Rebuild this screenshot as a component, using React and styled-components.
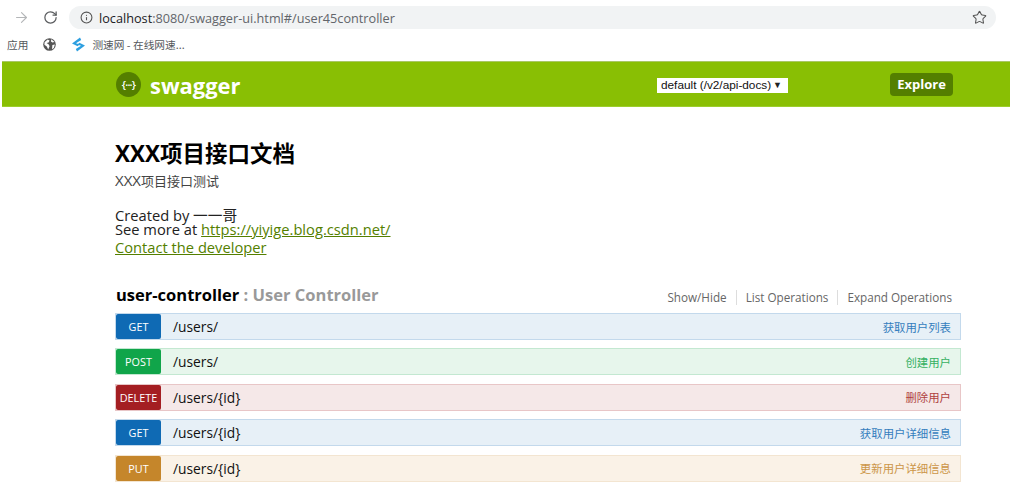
import React from "react";
import styled, { createGlobalStyle } from "styled-components";
import { ArrowRight, RotateCw, Info, Star } from "lucide-react";

const CJK = `"Open Sans", "Noto Sans CJK SC", sans-serif`;

const operations = [
  { method: "GET", path: "/users/", summary: "获取用户列表" },
  { method: "POST", path: "/users/", summary: "创建用户" },
  { method: "DELETE", path: "/users/{id}", summary: "删除用户" },
  { method: "GET", path: "/users/{id}", summary: "获取用户详细信息" },
  { method: "PUT", path: "/users/{id}", summary: "更新用户详细信息" },
];

const palette = {
  GET: { badge: "#0f6ab4", bg: "#e7f0f7", border: "#c3d9ec", text: "#0f6ab4" },
  POST: { badge: "#10a54a", bg: "#e7f6ec", border: "#c3e8d1", text: "#10a54a" },
  DELETE: { badge: "#a41e22", bg: "#f5e8e8", border: "#e8c6c7", text: "#a41e22" },
  PUT: { badge: "#c5862b", bg: "#faf2e7", border: "#f3e5d1", text: "#c5862b" },
};

export default function App() {
  return (
    <Page>
      <GlobalStyle />
      <Browser>
        <AddressRow>
          <NavIcon $muted>
            <ArrowRight size={17} strokeWidth={1.6} />
          </NavIcon>
          <NavIcon>
            <RotateCw size={15} strokeWidth={2} />
          </NavIcon>
          <AddressBar>
            <Info size={13} strokeWidth={2} color="#555" />
            <Url>
              <strong>localhost</strong>:8080/swagger-ui.html#/user45controller
            </Url>
            <Star size={15} strokeWidth={1.7} color="#555" />
          </AddressBar>
        </AddressRow>
        <Bookmarks>
          <BookmarkText>应用</BookmarkText>
          <svg width="13" height="13" viewBox="0 0 13 13">
            <circle cx="6.5" cy="6.5" r="6.3" fill="#555" />
            <path d="M1.6 4.2 4.6 1.6 6.6 2.6 5.6 4.4 3.6 5 5.8 6.6 6.6 8.2 5.2 11.4 3.8 8.4 1.4 6.8ZM8.2 1.2 11.6 4 9.4 4.6 8 3.4ZM9.4 7 11.9 6.6 10.8 10 9 11.2Z" fill="#fff" />
          </svg>
          <SiteLink>
            <svg width="15" height="15" viewBox="0 0 15 15">
              <path d="M9 .6 1 6.4 6.6 9.2 8.6 7.6 5 6.2 10.2 3Z" fill="#2d9fe0" />
              <path d="M6 14.4 14 8.6 8.4 5.8 6.4 7.4 10 8.8 4.8 12Z" fill="#2d9fe0" />
            </svg>
            <BookmarkText>测速网 - 在线网速...</BookmarkText>
          </SiteLink>
        </Bookmarks>
      </Browser>

      <Header>
        <HeaderInner>
          <Brand>
            <LogoMark>{"{···}"}</LogoMark>
            <BrandName>swagger</BrandName>
          </Brand>
          <SpecSelect>
            <span>default (/v2/api-docs)</span>
            <Caret>▼</Caret>
          </SpecSelect>
          <ExploreButton>Explore</ExploreButton>
        </HeaderInner>
      </Header>

      <Content>
        <Title>XXX项目接口文档</Title>
        <Description>
          <Latin>XXX</Latin>项目接口测试
        </Description>
        <Contact>
          <ContactLine>Created by 一一哥</ContactLine>
          <ContactLine>
            See more at <GreenLink>https://yiyige.blog.csdn.net/</GreenLink>
          </ContactLine>
          <DeveloperLine>
            <GreenLink>Contact the developer</GreenLink>
          </DeveloperLine>
        </Contact>

        <ResourceHead>
          <ResourceName>
            user-controller <ResourceNote>: User Controller</ResourceNote>
          </ResourceName>
          <Actions>
            <Action>Show/Hide</Action>
            <Action>List Operations</Action>
            <Action>Expand Operations</Action>
          </Actions>
        </ResourceHead>

        <OperationList>
          {operations.map((op, i) => (
            <Operation key={i} $method={op.method}>
              <MethodBadge $method={op.method}>{op.method}</MethodBadge>
              <OperationPath>{op.path}</OperationPath>
              <OperationSummary $method={op.method}>{op.summary}</OperationSummary>
            </Operation>
          ))}
        </OperationList>
      </Content>
    </Page>
  );
}

const GlobalStyle = createGlobalStyle`
  html, body {
    margin: 0;
    padding: 0;
    background: #fff;
  }
  * {
    box-sizing: border-box;
  }
`;

const Page = styled.div`
  width: 1012px;
  height: 500px;
  overflow: hidden;
  background: #fff;
  font-family: ${CJK};
`;

const Browser = styled.div`
  height: 61px;
  padding-top: 6px;
`;

const AddressRow = styled.div`
  display: flex;
  align-items: center;
  height: 23px;
  padding-left: 13px;
`;

const NavIcon = styled.div`
  display: flex;
  justify-content: center;
  width: 17px;
  margin-right: 12px;
  color: ${(p) => (p.$muted ? "#b4b6b8" : "#5a5c5f")};
`;

const AddressBar = styled.div`
  display: flex;
  align-items: center;
  width: 927px;
  height: 23px;
  margin-left: -2px;
  padding: 0 9px 0 11px;
  border-radius: 12px;
  background: #f1f3f4;
`;

const Url = styled.div`
  flex: 1;
  margin-left: 6px;
  font-family: "Open Sans", sans-serif;
  font-size: 12.7px;
  color: #62656a;

  strong {
    font-weight: 400;
    color: #202124;
  }
`;

const Bookmarks = styled.div`
  display: flex;
  align-items: center;
  gap: 15px;
  height: 20px;
  margin-top: 5px;
  padding-left: 7px;
`;

const BookmarkText = styled.span`
  font-family: "Noto Sans CJK SC", sans-serif;
  font-size: 10.7px;
  color: #55585c;
`;

const SiteLink = styled.div`
  display: flex;
  align-items: center;
  gap: 6px;
`;

const Header = styled.div`
  height: 46px;
  margin: 0 2px;
  background: #89bf04;
  border-top: 1px solid #a9c766;
  border-bottom: 1px solid #9cce2c;
`;

const HeaderInner = styled.div`
  display: flex;
  align-items: center;
  height: 100%;
  padding-left: 114px;
  padding-right: 57px;
`;

const Brand = styled.div`
  display: flex;
  align-items: center;
  gap: 9px;
  flex: 1;
`;

const LogoMark = styled.div`
  display: flex;
  align-items: center;
  justify-content: center;
  width: 25px;
  height: 25px;
  border-radius: 50%;
  background: #547f00;
  color: #fff;
  font-size: 11px;
  font-weight: 600;
  letter-spacing: -0.8px;
`;

const BrandName = styled.div`
  font-family: "Open Sans", sans-serif;
  font-size: 21.9px;
  font-weight: 700;
  color: #fff;
  line-height: 1;
  margin-top: 3px;
`;

const SpecSelect = styled.div`
  display: flex;
  align-items: center;
  justify-content: space-between;
  width: 131px;
  height: 15px;
  margin-top: 2px;
  margin-right: 102px;
  padding: 0 6px 0 4px;
  background: #fff;
  font-family: "Liberation Sans", sans-serif;
  font-size: 11.8px;
  color: #111;
`;

const Caret = styled.span`
  font-size: 9px;
  color: #222;
`;

const ExploreButton = styled.div`
  display: flex;
  align-items: center;
  justify-content: center;
  width: 63px;
  height: 23px;
  border-radius: 4px;
  background: #547f00;
  color: #fff;
  font-size: 13px;
  font-weight: 700;
`;

const Content = styled.div`
  width: 846px;
  margin-left: 115px;
`;

const Title = styled.h1`
  margin: 32px 0 0;
  font-family: ${CJK};
  font-size: 22.5px;
  font-weight: 700;
  line-height: 30px;
  color: #000;
`;

const Description = styled.div`
  height: 18px;
  margin-top: 2px;
  font-size: 13px;
  line-height: 18px;
  color: #444;
`;

const Latin = styled.span`
  font-size: 15px;
`;

const Contact = styled.div`
  margin-top: 19px;
  font-size: 14.7px;
  color: #222;
`;

const ContactLine = styled.div`
  line-height: 14px;
`;

const DeveloperLine = styled.div`
  margin-top: 4px;
  line-height: 14px;
`;

const GreenLink = styled.a`
  color: #547f00;
  text-decoration: underline;
`;

const ResourceHead = styled.div`
  display: flex;
  align-items: center;
  justify-content: space-between;
  height: 20px;
  margin-top: 30px;
  padding-left: 1px;
  padding-right: 9px;
`;

const ResourceName = styled.div`
  font-size: 16.5px;
  font-weight: 700;
  color: #000;
`;

const ResourceNote = styled.span`
  color: #999;
`;

const Actions = styled.div`
  display: flex;
  align-items: center;
  margin-top: 6px;
  font-size: 11.7px;
  color: #666;
`;

const Action = styled.div`
  padding: 0 9px;
  line-height: 15px;
  border-left: 1px solid #ddd;

  &:first-child {
    border-left: none;
  }

  &:last-child {
    padding-right: 0;
  }
`;

const OperationList = styled.div`
  display: flex;
  flex-direction: column;
  gap: 8.4px;
  margin-top: 9px;
`;

const Operation = styled.div`
  display: flex;
  align-items: center;
  height: 27px;
  background: ${(p) => palette[p.$method].bg};
  border: 1px solid ${(p) => palette[p.$method].border};
`;

const MethodBadge = styled.div`
  display: flex;
  align-items: center;
  justify-content: center;
  flex: none;
  width: 45px;
  height: 25px;
  border-radius: 2px;
  background: ${(p) => palette[p.$method].badge};
  color: #fff;
  font-size: 10.8px;
`;

const OperationPath = styled.div`
  flex: 1;
  padding-left: 12px;
  font-size: 13.8px;
  color: #111;
`;

const OperationSummary = styled.div`
  padding-right: 9px;
  font-size: 11.4px;
  color: ${(p) => palette[p.$method].text};
  opacity: 0.85;
`;
